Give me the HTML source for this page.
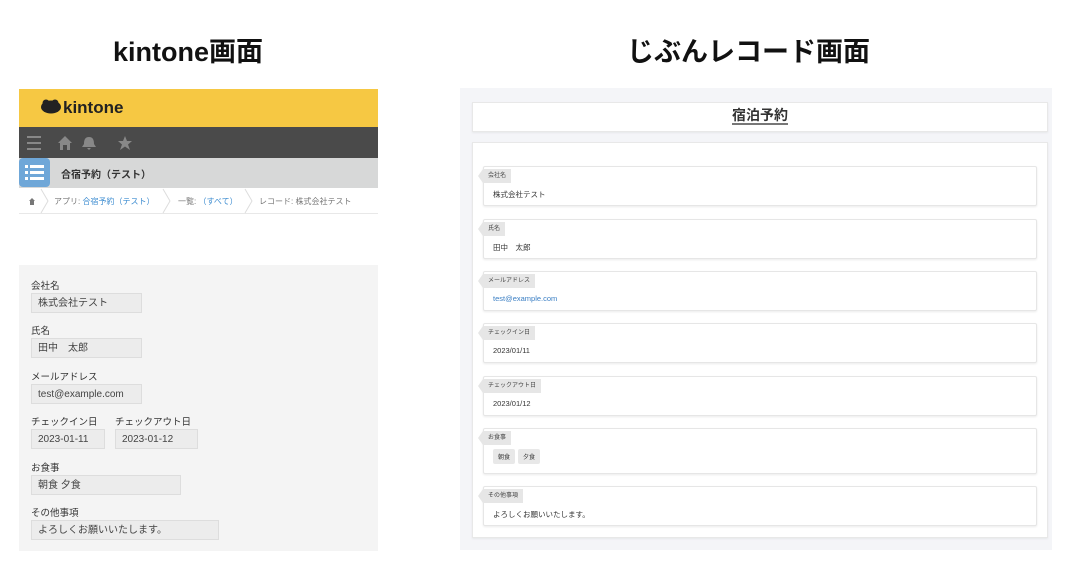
<!DOCTYPE html>
<html><head><meta charset="utf-8"><style>
*{margin:0;padding:0;box-sizing:border-box}
body{width:1080px;height:566px;background:#fff;font-family:"Liberation Sans","Noto Sans CJK JP",sans-serif;position:relative;overflow:hidden;color:#333}
.a{position:absolute}
.h1{font-size:27px;font-weight:bold;color:#111;top:30px}
.lbl{font-size:9.5px;color:#333}
.box{background:#ececec;border:1px solid #ddd;font-size:10px;color:#444;padding:4px 6px;height:20px;line-height:11px}
.card{position:absolute;left:483px;width:554px;background:#fff;border:1px solid #e6e6e6;box-shadow:0 1px 2px rgba(0,0,0,.08);border-radius:2px}
.tag{position:absolute;left:-6px;top:2px;height:14px;background:#e6e6e6;font-size:6px;line-height:14px;padding:0 5px 0 10px;color:#444;clip-path:polygon(5px 0,100% 0,100% 100%,5px 100%,0 50%)}
.val{position:absolute;left:9px;font-size:7.5px;color:#333}
.chip{display:inline-block;background:#e8e8e8;font-size:6px;padding:3px 5px;margin-right:3px;border-radius:2px}
</style></head><body>
<div class="a h1" style="left:113px">kintone画面</div>
<div class="a h1" style="left:627px">じぶんレコード画面</div>

<div class="a" style="left:19px;top:89px;width:359px;height:38px;background:#f6c843"></div>
<svg class="a" style="left:40px;top:99px" width="22" height="16" viewBox="0 0 22 16"><ellipse cx="11" cy="8" rx="10" ry="6.5" fill="#222"/><circle cx="6" cy="4" r="3.5" fill="#222"/><circle cx="15" cy="4" r="3.5" fill="#222"/></svg>
<div class="a" style="left:63px;top:98px;font-size:17px;font-weight:bold;color:#222">kintone</div>
<div class="a" style="left:19px;top:127px;width:359px;height:31px;background:#4a4a4a"></div>
<svg class="a" style="left:26px;top:135px" width="110" height="16" viewBox="0 0 110 16">
<g stroke="#888" stroke-width="2"><line x1="1" y1="2" x2="15" y2="2"/><line x1="1" y1="8" x2="15" y2="8"/><line x1="1" y1="14" x2="15" y2="14"/></g>
<path d="M32 8 L39 1 L46 8 L44 8 L44 15 L41 15 L41 10 L37 10 L37 15 L34 15 L34 8Z" fill="#888"/>
<path d="M63 2 C67 2 68 5 68 9 L70 12 L56 12 L58 9 C58 5 59 2 63 2Z M61 13 L65 13 L63 15Z" fill="#888"/>
<path d="M99 1 L101 6 L106 6 L102 9.5 L104 15 L99 11.5 L94 15 L96 9.5 L92 6 L97 6Z" fill="#888"/></svg>
<div class="a" style="left:19px;top:158px;width:359px;height:30px;background:#d7d8d8"></div>
<div class="a" style="left:19px;top:158px;width:31px;height:29px;background:#6fa7d8;border-radius:4px"></div>
<svg class="a" style="left:25px;top:164px" width="19" height="16"><g fill="#fff"><rect x="0" y="1" width="3" height="3"/><rect x="5" y="1" width="14" height="3"/><rect x="0" y="7" width="3" height="3"/><rect x="5" y="7" width="14" height="3"/><rect x="0" y="13" width="3" height="3"/><rect x="5" y="13" width="14" height="3"/></g></svg>
<div class="a" style="left:61px;top:166px;font-size:10px;font-weight:bold;color:#333">合宿予約（テスト）</div>
<div class="a" style="left:19px;top:213px;width:359px;height:1px;background:#e8e8e8"></div>
<svg class="a" style="left:19px;top:188px" width="350" height="26"><path d="M10 13 L13 10 L16 13 L15 13 L15 17 L11 17 L11 13Z" fill="#777"/><g stroke="#ddd" fill="none"><path d="M22 1 L29 13 L22 25"/><path d="M144 1 L151 13 L144 25"/><path d="M226 1 L233 13 L226 25"/></g></svg>
<div class="a" style="left:54px;top:196px;font-size:8px;color:#777">アプリ: <span style="color:#3b8bd0">合宿予約（テスト）</span></div>
<div class="a" style="left:178px;top:196px;font-size:8px;color:#777">一覧: <span style="color:#3b8bd0">（すべて）</span></div>
<div class="a" style="left:259px;top:196px;font-size:8px;color:#777">レコード: 株式会社テスト</div>

<div class="a" style="left:19px;top:265px;width:359px;height:286px;background:#f4f4f4"></div>
<div class="a lbl" style="left:31px;top:278px">会社名</div>
<div class="a box" style="left:31px;top:293px;width:111px">株式会社テスト</div>
<div class="a lbl" style="left:31px;top:323px">氏名</div>
<div class="a box" style="left:31px;top:338px;width:111px">田中　太郎</div>
<div class="a lbl" style="left:31px;top:369px">メールアドレス</div>
<div class="a box" style="left:31px;top:384px;width:111px">test@example.com</div>
<div class="a lbl" style="left:31px;top:414px">チェックイン日</div>
<div class="a lbl" style="left:115px;top:414px">チェックアウト日</div>
<div class="a box" style="left:31px;top:429px;width:74px">2023-01-11</div>
<div class="a box" style="left:115px;top:429px;width:83px">2023-01-12</div>
<div class="a lbl" style="left:31px;top:460px">お食事</div>
<div class="a box" style="left:31px;top:475px;width:150px">朝食 夕食</div>
<div class="a lbl" style="left:31px;top:505px">その他事項</div>
<div class="a box" style="left:31px;top:520px;width:188px">よろしくお願いいたします。</div>

<div class="a" style="left:460px;top:88px;width:592px;height:462px;background:#f4f5f8"></div>
<div class="a" style="left:472px;top:102px;width:576px;height:30px;background:#fff;border:1px solid #e8e8e8;box-shadow:0 1px 2px rgba(0,0,0,.06)"></div>
<div class="a" style="left:732px;top:107px;font-size:14px;font-weight:bold;color:#333;border-bottom:2px solid #777;line-height:16px">宿泊予約</div>
<div class="a" style="left:472px;top:142px;width:576px;height:396px;background:#fff;border:1px solid #e8e8e8;box-shadow:0 1px 2px rgba(0,0,0,.06)"></div>

<div class="card" style="top:166px;height:40px"><div class="tag">会社名</div><div class="val" style="top:22px">株式会社テスト</div></div>
<div class="card" style="top:219px;height:40px"><div class="tag">氏名</div><div class="val" style="top:22px">田中　太郎</div></div>
<div class="card" style="top:271px;height:40px"><div class="tag">メールアドレス</div><div class="val" style="top:22px;color:#3b7fc4">test@example.com</div></div>
<div class="card" style="top:323px;height:40px"><div class="tag">チェックイン日</div><div class="val" style="top:22px">2023/01/11</div></div>
<div class="card" style="top:376px;height:40px"><div class="tag">チェックアウト日</div><div class="val" style="top:22px">2023/01/12</div></div>
<div class="card" style="top:428px;height:46px"><div class="tag">お食事</div><div class="val" style="top:20px"><span class="chip">朝食</span><span class="chip">夕食</span></div></div>
<div class="card" style="top:486px;height:40px"><div class="tag">その他事項</div><div class="val" style="top:22px">よろしくお願いいたします。</div></div>
</body></html>
